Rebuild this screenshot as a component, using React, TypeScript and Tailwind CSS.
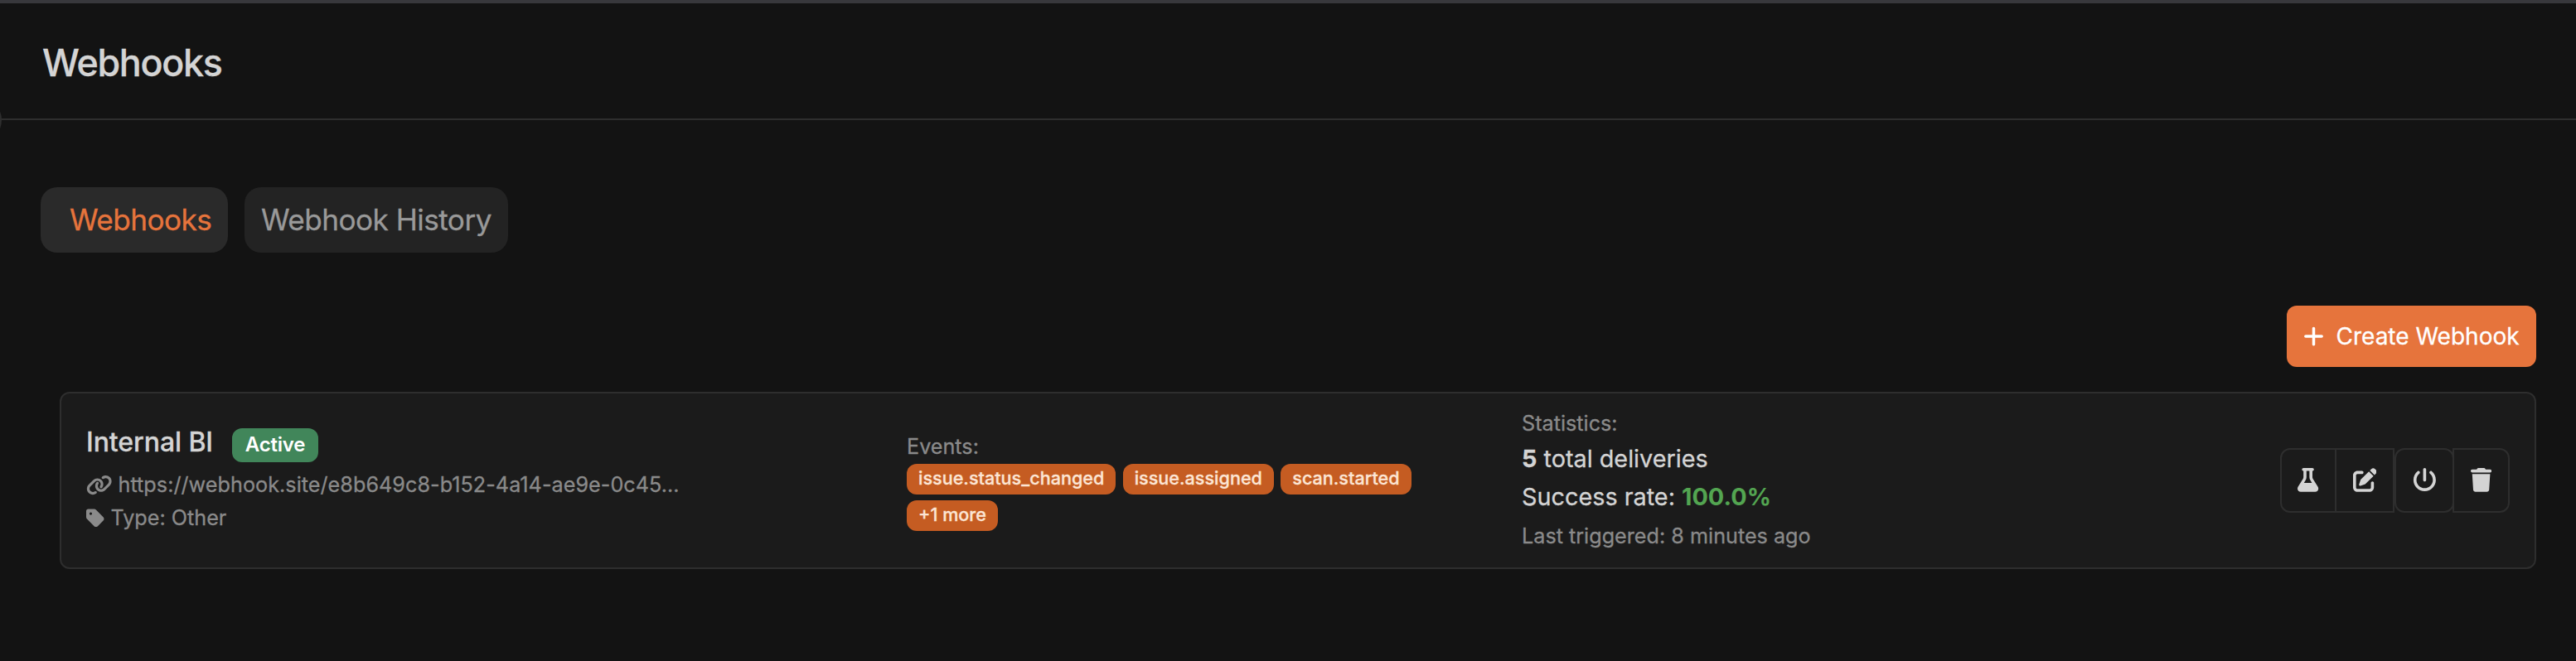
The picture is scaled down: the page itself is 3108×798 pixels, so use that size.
import type { ReactNode } from "react";
import { FaFlask, FaPenToSquare, FaPowerOff, FaTrash, FaLink, FaTag, FaPlus } from "react-icons/fa6";

function EventBadge({ children }: { children: ReactNode }) {
  return (
    <span className="flex h-[36.7px] items-center rounded-[12px] bg-[#c55c22] px-[14px] pb-[1.5px] text-[21.6px] leading-none font-medium text-[#fce5d4]">
      {children}
    </span>
  );
}

export default function App() {
  return (
    <div className="h-[798px] w-full overflow-hidden bg-[#131313] font-['Inter',sans-serif] text-[28.8px] leading-none text-[#d4d4d4] [-webkit-text-stroke:0.3px_currentColor]">
      <header className="relative flex h-[145px] items-center border-t-4 border-b-2 border-t-[#38383c] border-b-[#2e2e2e] px-[51px] pt-[5px]">
        <h1 className="text-[44.8px] leading-none font-medium tracking-[-1.3px]">Webhooks</h1>
        <span className="absolute -bottom-[29.5px] -left-[54px] h-[56px] w-[56px] rounded-full bg-[#2e2e2e]" />
      </header>

      <nav className="mt-[81px] flex h-[79px] gap-[20px] pl-[49px] text-[35.2px] leading-none tracking-[-0.56px]">
        <button className="flex w-[226px] items-center rounded-[20px] bg-[#2a2a2a] pl-[35px] whitespace-nowrap text-[#e6743c]">Webhooks</button>
        <button className="flex w-[318px] items-center rounded-[20px] bg-[#232323] pl-[20px] whitespace-nowrap text-[#999999]">Webhook History</button>
      </nav>

      <div className="mt-[64px] flex justify-end pr-[48px]">
        <button className="flex h-[74px] w-[301px] items-center rounded-[12px] bg-[#e6743c] pl-[20px] text-[28px] leading-none whitespace-nowrap text-white">
          <FaPlus className="h-[28px] w-[25px]" />
          <span className="ml-[14.5px]">Create Webhook</span>
        </button>
      </div>

      <section className="mt-[30px] mr-[48px] ml-[72px] flex h-[214px] items-center rounded-[12px] border-2 border-[#2e2e2e] bg-[#1b1b1b] px-[30px]">
        <div className="w-[990px] pt-[2px]">
          <div className="flex h-[41px] items-center">
            <h2 className="w-[154px] pb-[6px] text-[32px] leading-[36px] font-medium tracking-[-0.08px] whitespace-nowrap">Internal BI</h2>
            <span className="ml-[22px] flex h-[41px] w-[104px] items-center justify-center rounded-[12px] bg-[#41865a] text-[24px] leading-none font-semibold tracking-[-0.2px] text-white [-webkit-text-stroke:0px]">Active</span>
          </div>
          <div className="mt-[8px] flex h-[40px] items-center text-[25.2px] text-[#8a8a8a]">
            <FaLink className="h-[25.2px] w-[31.5px]" />
            <span className="ml-[7px] tracking-[0.03px]">https://webhook.site/e8b649c8-b152-4a14-ae9e-0c45...</span>
          </div>
          <div className="flex h-[40px] items-center text-[25.2px] text-[#8a8a8a]">
            <FaTag className="h-[25.2px] w-[22px]" />
            <span className="ml-[7.5px]">Type: Other</span>
          </div>
        </div>

        <div className="w-[742px] pt-[1.5px]">
          <div className="text-[25.2px] leading-[38px] text-[#8a8a8a]">Events:</div>
          <div className="mt-[1.5px] flex w-[640px] flex-wrap gap-x-[8.3px] gap-y-[7.8px]">
            <EventBadge>issue.status_changed</EventBadge>
            <EventBadge>issue.assigned</EventBadge>
            <EventBadge>scan.started</EventBadge>
            <EventBadge>+1 more</EventBadge>
          </div>
        </div>

        <div className="flex-1 pt-[3px]">
          <div className="text-[25.2px] leading-[38px] text-[#8a8a8a]">Statistics:</div>
          <div className="leading-[47px]"><strong className="font-bold">5</strong> total deliveries</div>
          <div className="leading-[46px]">Success rate: <strong className="font-bold text-[#53a551] [-webkit-text-stroke:0px]">100.0%</strong></div>
          <div className="text-[25.2px] leading-[48px] text-[#8a8a8a]">Last triggered: 8 minutes ago</div>
        </div>

        <div className="-mt-px flex h-[78px]">
          <button className="flex w-[68px] items-center justify-center rounded-l-[12px] border-2 border-[#2e2e2e]"><FaFlask className="h-[28.8px] w-[25.2px]" /></button>
          <button className="-ml-[2px] flex w-[72px] items-center justify-center border-2 border-[#2e2e2e]"><FaPenToSquare className="h-[28.8px] w-[28.8px]" /></button>
          <button className="flex w-[72px] items-center justify-center rounded-[12px] border-2 border-[#2e2e2e]"><FaPowerOff className="h-[28.8px] w-[28.8px]" /></button>
          <button className="-ml-[2px] flex w-[69px] items-center justify-center rounded-r-[12px] border-2 border-[#2e2e2e]"><FaTrash className="h-[28.8px] w-[25.2px]" /></button>
        </div>
      </section>
    </div>
  );
}
